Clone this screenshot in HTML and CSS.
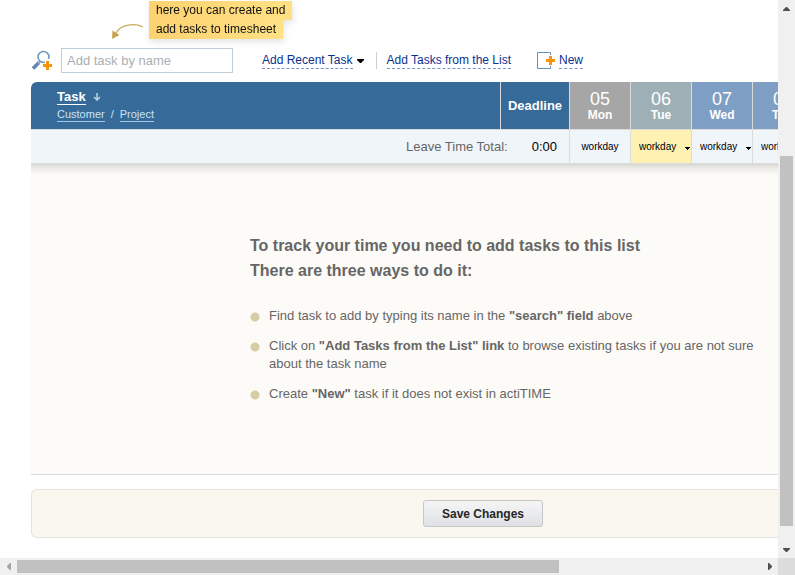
FILE: index.html
```html
<!DOCTYPE html>
<html lang="en">
<head>
<meta charset="utf-8">
<title>Timesheet</title>
<link rel="stylesheet" href="styles.css">
</head>
<body>
<div class="window">
  <main class="pane">
    <div class="hint">
      <svg class="hint-arrow" width="34" height="18" viewBox="0 0 34 18" aria-hidden="true">
        <path d="M32 6C24 2 10 3 5 12" fill="none" stroke="#c9aa5b" stroke-width="1.3"/>
        <path d="M1 18L1.500 9.500L4.500 11.500L8.500 14Z" fill="#c9a24d"/>
      </svg>
      <div class="hint-text">
        <div class="hint-line">here you can create and</div>
        <div class="hint-line">add tasks to timesheet</div>
      </div>
    </div>

    <form class="toolbar">
      <label class="search-label" for="task-search" aria-label="Add task by name">
        <svg width="22" height="22" viewBox="0 0 22 22">
          <path d="M1 18.500L7 12.500" stroke="#5f87ac" stroke-width="3.500"/>
          <path d="M6 13.500L8.500 11" stroke="#8cabc7" stroke-width="2"/>
          <circle cx="11.500" cy="7" r="5.500" fill="#fff" stroke="#7196b8" stroke-width="1.500"/>
          <path d="M15.500 9V21M10 15.500H21" stroke="#fff" stroke-width="5"/>
          <path d="M15.500 11V20M11 15.500H20" stroke="#f7940a" stroke-width="3"/>
        </svg>
      </label>
      <input class="search" id="task-search" type="text" placeholder="Add task by name">
      <a class="link recent" href="#">Add Recent Task</a>
      <svg class="caret" width="7" height="4" viewBox="0 0 7 4"><path d="M0 0H7V1L4 4H3L0 1Z" fill="#000"/></svg>
      <span class="separator"></span>
      <a class="link" href="#">Add Tasks from the List</a>
      <svg class="new-icon" width="19" height="18" viewBox="0 0 19 18" aria-hidden="true">
        <path d="M13.500 3V.5H.5V16.500H13.500V14" fill="none" stroke="#6991b5"/>
        <path d="M13.500 4V13M9 8.500H18" stroke="#f7940a" stroke-width="3"/>
      </svg>
      <a class="link" href="#">New</a>
    </form>

    <table class="sheet">
      <thead>
        <tr>
          <th class="task-head">
            <div class="task-row"><a class="sort" href="#">Task</a>
              <svg width="8" height="8" viewBox="0 0 8 8"><path d="M4 0V7M1 4L4 7L7 4" fill="none" stroke="#b9d3e6" stroke-width="1.500"/></svg>
            </div>
            <div class="sub-row"><a class="sub" href="#">Customer</a><span>/</span><a class="sub" href="#">Project</a></div>
          </th>
          <th class="deadline">Deadline</th>
          <th class="day today-off"><span class="date">05</span>Mon</th>
          <th class="day current"><span class="date">06</span>Tue</th>
          <th class="day"><span class="date">07</span>Wed</th>
          <th class="day"><span class="date">08</span>Thu</th>
        </tr>
      </thead>
      <tbody>
        <tr>
          <td class="leave" colspan="2">
            <div class="leave-row"><span>Leave Time Total:</span><span class="total">0:00</span></div>
          </td>
          <td class="status plain">workday</td>
          <td class="status marked"><select class="kind" aria-label="Tuesday"><option>workday</option></select></td>
          <td class="status"><select class="kind" aria-label="Wednesday"><option>workday</option></select></td>
          <td class="status"><select class="kind" aria-label="Thursday"><option>workday</option></select></td>
        </tr>
      </tbody>
    </table>

    <section class="empty">
      <div class="guide">
        <h1 class="title">To track your time you need to add tasks to this list<br>There are three ways to do it:</h1>
        <ul class="ways">
          <li class="way">Find task to add by typing its name in the <b>"search" field</b> above</li>
          <li class="way">Click on <b>"Add Tasks from the List" link</b> to browse existing tasks if you are not sure about the task name</li>
          <li class="way">Create <b>"New"</b> task if it does not exist in actiTIME</li>
        </ul>
      </div>
    </section>

    <footer class="actions">
      <button class="save" type="button">Save Changes</button>
    </footer>
  </main>

  <div class="bar vertical">
    <span class="bar-end"><svg width="7" height="4" viewBox="0 0 7 4"><path d="M0 4V3L3 0H4L7 3V4Z" fill="#505050"/></svg></span>
    <span class="v-before"></span><span class="thumb v-thumb"></span><span class="v-after"></span>
    <span class="bar-end"><svg width="7" height="4" viewBox="0 0 7 4"><path d="M0 0V1L3 4H4L7 1V0Z" fill="#505050"/></svg></span>
  </div>
  <div class="bar horizontal">
    <span class="bar-end"><svg width="4" height="7" viewBox="0 0 4 7"><path d="M4 0H3L0 3V4L3 7H4Z" fill="#a3a3a3"/></svg></span>
    <span class="thumb h-thumb"></span><span class="h-after"></span>
    <span class="bar-end"><svg width="4" height="7" viewBox="0 0 4 7"><path d="M0 0H1L4 3V4L1 7H0Z" fill="#505050"/></svg></span>
  </div>
  <div class="corner"></div>
</div>
</body>
</html>
```
FILE: styles.css
```css
* { box-sizing: border-box; }

body {
  margin: 0;
  background: #fff;
  font-family: "Liberation Sans", Arial, sans-serif;
  font-size: 12px;
}

.window {
  display: grid;
  grid-template-columns: minmax(0, 1fr) 17px;
  grid-template-rows: minmax(0, 1fr) 17px;
  height: 100vh;
}

.pane {
  overflow: hidden;
  padding: 1px 0 0 31px;
}

/* Hint above the toolbar */
.hint { display: flex; padding-left: 80px; }
.hint-arrow { margin: 20px 4px 0 0; }
.hint-text {
  display: flex;
  flex-direction: column;
  align-items: flex-start;
  filter: drop-shadow(1px 3px 3px #e4e4e4);
}
.hint-line {
  padding: 0 7px;
  line-height: 19px;
  color: #111;
  background: linear-gradient(90deg, #fdd271, #ffe184);
}

/* Toolbar */
.toolbar { display: flex; align-items: center; height: 43px; }
.search-label { display: flex; width: 30px; padding-left: 1px; }
.search {
  width: 172px;
  height: 25px;
  margin-right: 29px;
  padding: 0 5px;
  border: 1px solid #bfcbd5;
  background: #fff;
  font: 13px "Liberation Sans", Arial, sans-serif;
}
.search::placeholder { color: #a9afb4; }
.link {
  border-bottom: 1px dashed #7d92cc;
  color: #0b318f;
  line-height: 15px;
  text-decoration: none;
  white-space: nowrap;
}
.caret { margin-left: 4px; }
.separator { width: 1px; height: 17px; margin: 0 10px 0 12px; background: #c8d0d7; }
.new-icon { margin: 0 3px 0 26px; }

/* Timesheet */
.sheet {
  width: calc(100% + 36px);
  border-collapse: separate;
  border-spacing: 0;
  table-layout: fixed;
}
.sheet th, .sheet td { padding: 0; border-right: 1px solid #dbdbdb; border-bottom: 1px solid #dbdbdb; }
.sheet th { height: 48px; background: #356a99; color: #fff; }
.sheet td { height: 34px; background: #f0f5fa; }
.sheet .task-head { padding: 0 26px; border-radius: 6px 0 0 0; text-align: left; }
.task-row { display: flex; align-items: center; gap: 7px; }
.sort {
  border-bottom: 1px solid #fff;
  color: #fff;
  font-size: 13px;
  line-height: 15px;
  text-decoration: none;
}
.sub-row { display: flex; gap: 6px; margin-top: 3px; color: #c8e3f5; font-size: 11px; font-weight: normal; line-height: 13px; }
.sub { border-bottom: 1px solid #a4c7df; color: #c8e3f5; text-decoration: none; }
.sheet .deadline { width: 69px; font-size: 13px; }
.sheet .day { width: 61px; background: #7e9ec4; line-height: 14px; }
.sheet .today-off { background: #a6a6a6; }
.sheet .current { background: #9eafb5; }
.date { display: block; font-size: 18px; font-weight: normal; line-height: 18px; }
.leave-row { display: flex; justify-content: flex-end; gap: 24px; padding-right: 12px; color: #666; font-size: 13px; }
.total { color: #000; }
.status { font-size: 10px; }
.plain { text-align: center; }
.sheet .marked { background: #fff1b2; }
.kind {
  display: block;
  width: 100%;
  height: 33px;
  padding: 0 0 0 8px;
  border: 0;
  appearance: none;
  background:
    linear-gradient(#000, #000) right 1px top 17px / 5px 1px no-repeat,
    linear-gradient(#000, #000) right 2px top 18px / 3px 1px no-repeat,
    linear-gradient(#000, #000) right 3px top 19px / 1px 1px no-repeat;
  color: #000;
  font: 10px "Liberation Sans", Arial, sans-serif;
}

/* Empty timesheet */
.empty {
  height: 311px;
  padding: 69px 0 0 219px;
  border-bottom: 1px solid #dbdbdb;
  background: linear-gradient(#d8d8d3, #efede9 5px, #fdfbf7 11px);
  color: #666;
}
.guide { max-width: 520px; }
.title { margin: 0; font-size: 16px; line-height: 25px; }
.ways { margin: 24px 0 0; padding: 0; list-style: none; font-size: 13px; line-height: 18px; }
.way {
  margin-bottom: 12px;
  padding-left: 19px;
  background: radial-gradient(circle at 5px 10px, #d3cca5 4px, transparent 5px);
}

/* Footer */
.actions {
  display: flex;
  margin-top: 14px;
  padding: 10px 0 10px 391px;
  border: 1px solid #e3e3df;
  border-right: 0;
  border-radius: 6px 0 0 6px;
  background: #faf7ef;
}
.save {
  width: 120px;
  height: 27px;
  padding: 0;
  border: 1px solid #c5c7c9;
  border-radius: 3px;
  background: linear-gradient(#f5f5f6, #dfe1e4);
  color: #272727;
  font: bold 12px "Liberation Sans", Arial, sans-serif;
}

/* Scroll bars */
.bar { display: flex; background: #f0f0f0; }
.vertical { flex-direction: column; }
.bar-end { display: flex; flex: 0 0 17px; align-items: center; justify-content: center; }
.thumb { background: #c1c1c1; }
.v-before { flex: 139; }
.v-thumb { flex: 370; margin: 0 2px; }
.v-after { flex: 15; }
.h-thumb { flex: 542; margin: 2px 0; }
.h-after { flex: 202; }
.corner { background: #dcdcdc; }
```
